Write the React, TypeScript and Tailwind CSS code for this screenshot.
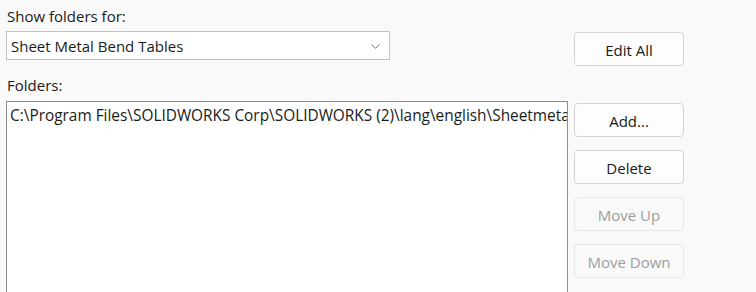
import { ChevronDown } from "lucide-react";

const font = { fontFamily: '"Open Sans", "Noto Sans", Arial, sans-serif' };

function Button({ label, disabled }: { label: string; disabled?: boolean }) {
  return (
    <button
      disabled={disabled}
      className={
        disabled
          ? "h-[34px] w-[110px] rounded-[4px] border border-[#e6e6e6] bg-[#f9f9f9] pt-[2px] text-[15px] text-[#9e9e9e]"
          : "h-[34px] w-[110px] rounded-[4px] border border-[#d4d4d4] bg-[#fdfdfd] pt-[2px] text-[15px] text-[#1b1b1b]"
      }
    >
      {label}
    </button>
  );
}

export default function App() {
  return (
    <div className="h-[292px] w-[756px] overflow-hidden bg-[#f9f9f9] pl-[6px]" style={font}>
      <div className="flex gap-[6px]">
        {/* left column */}
        <div className="flex w-[562px] flex-col">
          <div className="flex h-[31px] items-center pl-[1px] pt-[2px] text-[15px] text-[#1b1b1b]">
            Show folders for:
          </div>
          <div className="flex h-[29px] w-[384px] items-center justify-between border border-[#c2c2c2] bg-white pl-[4px] pr-[6px] pt-[1px] text-[15px] text-[#1b1b1b]">
            <span>Sheet Metal Bend Tables</span>
            <ChevronDown className="size-[15px] text-[#5c5c5c]" strokeWidth={1.3} />
          </div>
          <div className="flex h-[41px] items-center pl-[1px] pt-[9px] text-[15px] text-[#1b1b1b]">
            Folders:
          </div>
          <div className="h-[200px] overflow-hidden border border-[#8a8d94] bg-white pl-[3px] pt-[4px]">
            <div className="overflow-hidden whitespace-nowrap text-[15.4px] leading-[20px] text-[#1b1b1b]">
              C:\Program Files\SOLIDWORKS Corp\SOLIDWORKS (2)\lang\english\Sheetmetal Bend Tables
            </div>
          </div>
        </div>

        {/* right column */}
        <div className="flex flex-col gap-[13px] pt-[32px]">
          <Button label="Edit All" />
          <div className="mt-[24px] flex flex-col gap-[13px]">
            <Button label="Add..." />
            <Button label="Delete" />
            <Button label="Move Up" disabled />
            <Button label="Move Down" disabled />
          </div>
        </div>
      </div>
    </div>
  );
}
